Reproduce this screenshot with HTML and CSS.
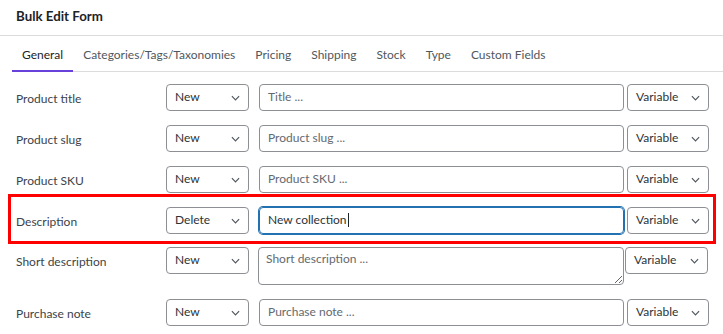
FILE: index.html
```html
<!DOCTYPE html>
<html lang="en">
  <head>
    <meta charset="UTF-8" />
    <meta name="viewport" content="width=device-width, initial-scale=1.0" />
    <title>Bulk Edit Form</title>
    <link rel="stylesheet" href="styles.css">
  </head>
  <body>
    <div class="panel">
      <header class="panel-header">
        <h2>Bulk Edit Form</h2>
      </header>

      <nav class="tabs">
        <a class="tab active">General</a>
        <a class="tab">Categories/Tags/Taxonomies</a>
        <a class="tab">Pricing</a>
        <a class="tab">Shipping</a>
        <a class="tab">Stock</a>
        <a class="tab">Type</a>
        <a class="tab">Custom Fields</a>
      </nav>

      <div class="fields">
        <div class="field-row">
          <label class="field-label">Product title</label>
          <div class="select select-action">New
            <svg class="chevron" viewBox="0 0 10 6"><path d="M1 1l4 4 4-4" /></svg>
          </div>
          <div class="text-box placeholder">Title ...</div>
          <div class="select select-type">Variable
            <svg class="chevron" viewBox="0 0 10 6"><path d="M1 1l4 4 4-4" /></svg>
          </div>
        </div>

        <div class="field-row">
          <label class="field-label">Product slug</label>
          <div class="select select-action">New
            <svg class="chevron" viewBox="0 0 10 6"><path d="M1 1l4 4 4-4" /></svg>
          </div>
          <div class="text-box placeholder">Product slug ...</div>
          <div class="select select-type">Variable
            <svg class="chevron" viewBox="0 0 10 6"><path d="M1 1l4 4 4-4" /></svg>
          </div>
        </div>

        <div class="field-row">
          <label class="field-label">Product SKU</label>
          <div class="select select-action">New
            <svg class="chevron" viewBox="0 0 10 6"><path d="M1 1l4 4 4-4" /></svg>
          </div>
          <div class="text-box placeholder">Product SKU ...</div>
          <div class="select select-type">Variable
            <svg class="chevron" viewBox="0 0 10 6"><path d="M1 1l4 4 4-4" /></svg>
          </div>
        </div>

        <div class="field-row highlighted">
          <label class="field-label">Description</label>
          <div class="select select-action">Delete
            <svg class="chevron" viewBox="0 0 10 6"><path d="M1 1l4 4 4-4" /></svg>
          </div>
          <div class="text-box focused">New collection<span class="caret"></span></div>
          <div class="select select-type">Variable
            <svg class="chevron" viewBox="0 0 10 6"><path d="M1 1l4 4 4-4" /></svg>
          </div>
        </div>

        <div class="field-row tall">
          <label class="field-label">Short description</label>
          <div class="select select-action">New
            <svg class="chevron" viewBox="0 0 10 6"><path d="M1 1l4 4 4-4" /></svg>
          </div>
          <textarea class="text-area" placeholder="Short description ..."></textarea>
          <div class="select select-type">Variable
            <svg class="chevron" viewBox="0 0 10 6"><path d="M1 1l4 4 4-4" /></svg>
          </div>
        </div>

        <div class="field-row">
          <label class="field-label">Purchase note</label>
          <div class="select select-action">New
            <svg class="chevron" viewBox="0 0 10 6"><path d="M1 1l4 4 4-4" /></svg>
          </div>
          <div class="text-box placeholder">Purchase note ...</div>
          <div class="select select-type">Variable
            <svg class="chevron" viewBox="0 0 10 6"><path d="M1 1l4 4 4-4" /></svg>
          </div>
        </div>
      </div>
    </div>
  </body>
</html>
```

FILE: styles.css
```css
* {
  margin: 0;
  padding: 0;
  box-sizing: border-box;
}

body {
  font-family: "Segoe UI", Lato, "Open Sans", sans-serif;
  font-size: 12px;
  color: #3c434a;
  background: #fff;
  overflow: hidden;
}

.panel-header {
  height: 36px;
  padding: 0 16px;
  display: flex;
  align-items: center;
  border-bottom: 1px solid #dcdcde;
}

.panel-header h2 {
  font-size: 13.3px;
  font-weight: 700;
  color: #1d2327;
  padding-bottom: 4px;
}

.tabs {
  display: flex;
  margin: 0 0 0 12px;
  height: 36px;
  border-bottom: 1px solid #dcdcde;
}

.tab {
  padding: 11px 10px 0;
  color: #50575e;
  border-bottom: 2px solid transparent;
  margin-bottom: -1px;
}

.tab.active {
  color: #1d2327;
  border-bottom-color: #6741d9;
}

.fields {
  padding: 12px 0 0 16px;
}

.field-row {
  display: flex;
  align-items: flex-start;
  width: fit-content;
  margin-bottom: 14px;
  position: relative;
}

.field-label {
  width: 150px;
  height: 27px;
  line-height: 30px;
  color: #3c434a;
}

.select {
  height: 27px;
  border: 1px solid #8c8f94;
  border-radius: 4px;
  padding: 0 8px 2px;
  display: flex;
  align-items: center;
  justify-content: space-between;
  color: #2c3338;
}

.select-action {
  width: 83px;
  margin-right: 10px;
}

.select-type {
  width: 82px;
  margin-left: 3px;
}

.chevron {
  width: 9px;
  height: 6px;
  fill: none;
  stroke: #50575e;
  stroke-width: 1.3;
  margin-top: 2px;
}

.text-box {
  width: 365px;
  height: 27px;
  border: 1px solid #8c8f94;
  border-radius: 4px;
  padding: 0 8px 2px;
  display: flex;
  align-items: center;
  color: #2c3338;
}

.placeholder {
  color: #646970;
}

.text-box.focused {
  border-color: #2271b1;
  box-shadow: 0 0 0 1px #2271b1;
}

.caret {
  display: inline-block;
  width: 1px;
  height: 14px;
  background: #1d2327;
  margin-left: 1px;
}

.highlighted::after {
  content: "";
  position: absolute;
  top: -13px;
  bottom: -10px;
  left: -8px;
  right: -7px;
  border: 3px solid #ff0000;
  pointer-events: none;
}

.field-row.tall {
  margin-top: -1px;
}

.text-area {
  width: 366px;
  height: 38px;
  margin-left: -1px;
  border: 1px solid #8c8f94;
  border-radius: 4px;
  padding: 3px 7px;
  font-family: inherit;
  font-size: 12px;
  color: #2c3338;
  resize: vertical;
}

.text-area::placeholder {
  color: #646970;
}

.tall .select-type {
  margin-left: 1px;
  width: 83px;
}
```
